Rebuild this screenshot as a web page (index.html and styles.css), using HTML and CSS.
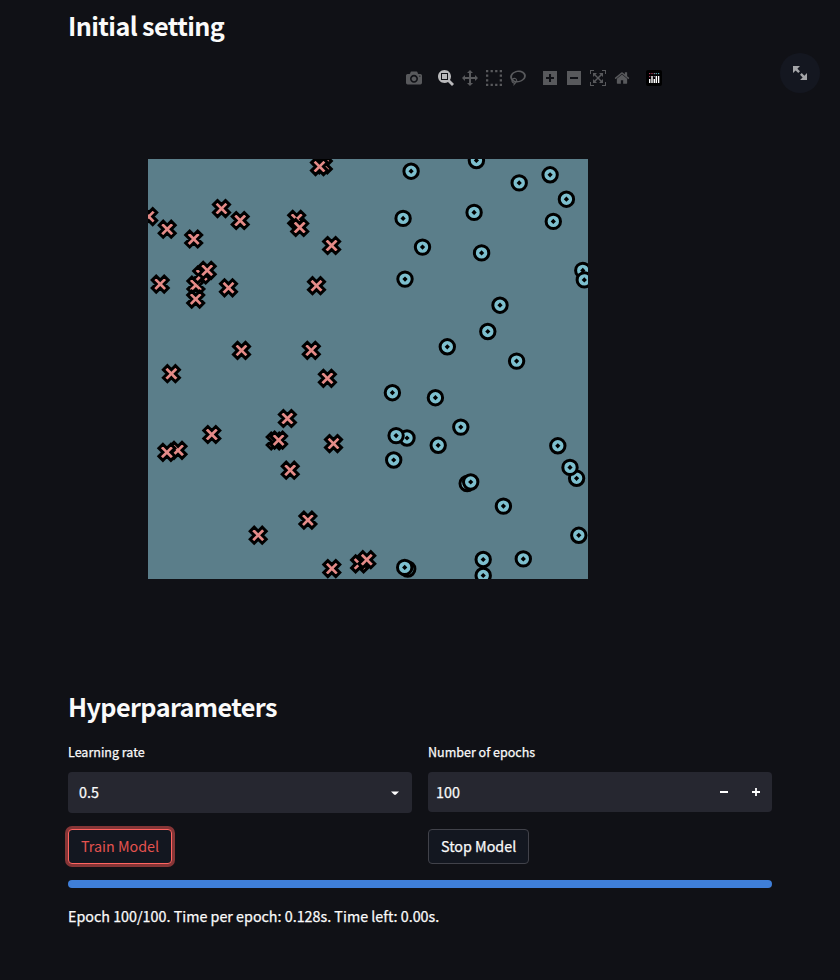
FILE: index.html
```html
<!DOCTYPE html>
<html lang="en">
<head>
<meta charset="utf-8">
<title>Model training</title>
<link rel="stylesheet" href="styles.css">
</head>
<body>
<main class="page">
  <h2 class="heading">Initial setting</h2>
  <section class="chart">
    <div class="modebar">
      <div class="group">
        <svg class="icon" viewBox="0 0 1000 1000"><path transform="matrix(1 0 0 -1 0 850)" d="m500 450c-83 0-150-67-150-150 0-83 67-150 150-150 83 0 150 67 150 150 0 83-67 150-150 150z m400 150h-120c-16 0-34 13-39 29l-31 93c-6 15-23 28-40 28h-340c-16 0-34-13-39-28l-31-94c-6-15-23-28-40-28h-120c-55 0-100-45-100-100v-450c0-55 45-100 100-100h800c55 0 100 45 100 100v450c0 55-45 100-100 100z m-400-550c-138 0-250 112-250 250 0 138 112 250 250 250 138 0 250-112 250-250 0-138-112-250-250-250z m365 380c-19 0-35 16-35 35 0 19 16 35 35 35 19 0 35-16 35-35 0-19-16-35-35-35z"/></svg>
      </div>
      <div class="group">
        <svg class="icon active" viewBox="0 0 1000 1000"><path transform="matrix(1 0 0 -1 0 850)" d="m1000-25l-250 251c40 63 63 138 63 218 0 224-182 406-407 406-224 0-406-182-406-406s183-406 407-406c80 0 155 22 218 62l250-250 125 125z m-812 250l0 438 437 0 0-438-437 0z m62 375l313 0 0-312-313 0 0 312z"/></svg>
        <svg class="icon" viewBox="0 0 1000 1000"><path transform="matrix(1 0 0 -1 0 850)" d="m1000 350l-187 188 0-125-250 0 0 250 125 0-188 187-187-187 125 0 0-250-250 0 0 125-188-188 186-187 0 125 252 0 0-250-125 0 187-188 188 188-125 0 0 250 250 0 0-126 187 188z"/></svg>
        <svg class="icon" viewBox="0 0 1000 1000"><path d="M0 0h143v143H0zM286 0h143v143H286zM571 0h143v143H571zM857 0h143v143H857zM0 857h143v143H0zM286 857h143v143H286zM571 857h143v143H571zM857 857h143v143H857zM0 286h143v143H0zM0 571h143v143H0zM857 286h143v143H857zM857 571h143v143H857z"/></svg>
        <svg class="icon" viewBox="0 0 1031 1000"><path transform="matrix(1 0 0 -1 0 850)" d="m1018 538c-36 207-290 336-568 286-277-48-473-256-436-463 10-57 36-108 76-151-13-66 11-137 68-183 34-28 75-41 114-42l-55-70 0 0c-2-1-3-2-4-3-10-14-8-34 5-45 14-11 34-8 45 4 1 1 2 3 2 5l0 0 113 140c16 11 31 24 45 40 4 3 6 7 8 11 48-3 100 0 151 9 278 48 473 255 436 462z m-624-379c-80 14-149 48-197 96 42 42 109 47 156 9 33-26 47-66 41-105z m-187-74c-19 16-33 37-39 60 50-32 109-55 174-68-42-25-95-24-135 8z m360 75c-34-7-69-9-102-8 8 62-16 128-68 170-73 59-175 54-244-5-9 20-16 40-20 61-28 159 121 317 333 354s407-60 434-217c28-159-121-318-333-355z"/></svg>
      </div>
      <div class="group">
        <svg class="icon" viewBox="0 0 875 1000"><path transform="matrix(1 0 0 -1 0 850)" d="m1 787l0-875 875 0 0 875-875 0z m687-500l-187 0 0-187-125 0 0 187-188 0 0 125 188 0 0 187 125 0 0-187 187 0 0-125z"/></svg>
        <svg class="icon" viewBox="0 0 875 1000"><path transform="matrix(1 0 0 -1 0 850)" d="m0 788l0-876 876 0 0 876-876 0z m688-500l-500 0 0 125 500 0 0-125z"/></svg>
        <svg class="icon" viewBox="0 0 1000 1000"><path transform="matrix(1 0 0 -1 0 850)" d="m250 850l-187 0-63 0 0-62 0-188 63 0 0 188 187 0 0 62z m688 0l-188 0 0-62 188 0 0-188 62 0 0 188 0 62-62 0z m-875-938l0 188-63 0 0-188 0-62 63 0 187 0 0 62-187 0z m875 188l0-188-188 0 0-62 188 0 62 0 0 62 0 188-62 0z m-125 188l-1 0-93-94-156 156 156 156 92-93 2 0 0 250-250 0 0-2 93-92-156-156-156 156 94 92 0 2-250 0 0-250 0 0 93 93 157-156-157-156-93 94 0 0 0-250 250 0 0 0-94 93 156 157 156-157-93-93 0 0 250 0 0 250z"/></svg>
        <svg class="icon" viewBox="0 0 928.6 1000"><path transform="matrix(1 0 0 -1 0 850)" d="m786 296v-267q0-15-11-26t-25-10h-214v214h-143v-214h-214q-15 0-25 10t-11 26v267q0 1 0 2t0 2l321 264 321-264q1-1 1-4z m124 39l-34-41q-5-5-12-6h-2q-7 0-12 3l-386 322-386-322q-7-4-13-4-7 2-12 7l-35 41q-4 5-3 13t6 12l401 334q18 15 42 15t43-15l136-114v109q0 8 5 13t13 5h107q8 0 13-5t5-13v-227l122-102q5-5 6-12t-4-13z"/></svg>
      </div>
      <div class="group">
        <svg class="icon" viewBox="0 0 16 16"><rect width="16" height="16" rx="2" fill="#000"/><g fill="#fff"><rect x="3" y="9" width="1.4" height="4"/><rect x="5.3" y="6" width="1.4" height="7"/><rect x="7.6" y="9" width="1.4" height="4"/><rect x="9.6" y="6" width="1.4" height="7"/><rect x="11.9" y="6" width="1.4" height="7"/></g><g fill="#d9486f"><circle cx="3.7" cy="3.6" r=".7"/><circle cx="3.7" cy="6.6" r=".7"/><circle cx="6" cy="3.6" r=".7"/></g><g fill="#9b93ad"><circle cx="8.3" cy="3.6" r=".7"/><circle cx="8.3" cy="6.6" r=".7"/></g><g fill="#61bfc7"><circle cx="10.3" cy="3.6" r=".7"/><circle cx="12.6" cy="3.6" r=".7"/></g></svg>
      </div>
    </div>
    <div class="fullscreen"><svg viewBox="0 0 8 8"><path d="M0 0v4l1.5-1.5 1.5 1.5 1-1-1.5-1.5 1.5-1.5h-4zm5 4l-1 1 1.5 1.5-1.5 1.5h4v-4l-1.5 1.5-1.5-1.5z"/></svg></div>
    <svg class="plot" viewBox="148 159 440 420">
      <defs>
        <path id="x" class="cross" d="M0 4l4 4 4-4-4-4 4-4-4-4-4 4-4-4-4 4 4 4-4 4 4 4z"/>
        <g id="o" class="ring"><circle r="7.2"/><path d="M0 .5L.5 0 0-.5-.5 0z"/></g>
      </defs>
      <use href="#x" x="323.3" y="165"/><use href="#x" x="319.5" y="166.6"/>
      <use href="#x" x="148.7" y="216.6"/><use href="#x" x="167.2" y="229.2"/>
      <use href="#x" x="221.5" y="208.6"/><use href="#x" x="240.2" y="220.5"/>
      <use href="#x" x="193.7" y="239"/><use href="#x" x="296.7" y="219.3"/>
      <use href="#x" x="299.7" y="227.5"/><use href="#x" x="331.6" y="245.5"/>
      <use href="#x" x="160.2" y="284.1"/><use href="#x" x="195.9" y="285"/>
      <use href="#x" x="201.7" y="275"/><use href="#x" x="207.2" y="270.3"/>
      <use href="#x" x="195.7" y="299.1"/><use href="#x" x="228.5" y="287.8"/>
      <use href="#x" x="316.5" y="285.7"/><use href="#x" x="171.4" y="373.7"/>
      <use href="#x" x="241.5" y="350.4"/><use href="#x" x="311.3" y="350.3"/>
      <use href="#x" x="327.4" y="378.3"/><use href="#x" x="287.4" y="418.5"/>
      <use href="#x" x="275.2" y="441"/><use href="#x" x="278.6" y="440.1"/>
      <use href="#x" x="211.8" y="434.5"/><use href="#x" x="178" y="450.3"/>
      <use href="#x" x="166.9" y="452.3"/><use href="#x" x="333.5" y="443.6"/>
      <use href="#x" x="290.2" y="470.2"/><use href="#x" x="307.9" y="520.1"/>
      <use href="#x" x="258.2" y="535.2"/><use href="#x" x="331.8" y="568.6"/>
      <use href="#x" x="359.6" y="563.9"/><use href="#x" x="366.8" y="559.7"/>
      <use href="#o" x="411.1" y="171.2"/><use href="#o" x="476.4" y="160.5"/>
      <use href="#o" x="519.2" y="182.9"/><use href="#o" x="550.1" y="174.8"/>
      <use href="#o" x="566.4" y="199.2"/><use href="#o" x="553.3" y="221.4"/>
      <use href="#o" x="403.1" y="218.4"/><use href="#o" x="474.1" y="212.4"/>
      <use href="#o" x="422.5" y="247.1"/><use href="#o" x="481.6" y="252.9"/>
      <use href="#o" x="405" y="279.1"/><use href="#o" x="500" y="305.2"/>
      <use href="#o" x="582.8" y="270.4"/><use href="#o" x="584.3" y="279.9"/>
      <use href="#o" x="487.8" y="331.5"/><use href="#o" x="447.3" y="346.8"/>
      <use href="#o" x="516.6" y="361.1"/><use href="#o" x="392.4" y="392.7"/>
      <use href="#o" x="435.4" y="397.7"/><use href="#o" x="460.8" y="427.1"/>
      <use href="#o" x="407" y="438"/><use href="#o" x="396.1" y="435.6"/>
      <use href="#o" x="438.2" y="445.3"/><use href="#o" x="393.7" y="460"/>
      <use href="#o" x="557.8" y="445.8"/><use href="#o" x="576.6" y="478.3"/>
      <use href="#o" x="570" y="467.4"/><use href="#o" x="467.2" y="483.5"/>
      <use href="#o" x="470.7" y="482"/><use href="#o" x="503.4" y="506.1"/>
      <use href="#o" x="578.8" y="535.3"/><use href="#o" x="407.7" y="569"/>
      <use href="#o" x="404.7" y="567.4"/><use href="#o" x="483.2" y="575.5"/>
      <use href="#o" x="483.2" y="559.5"/><use href="#o" x="523.3" y="558.9"/>
    </svg>
  </section>
  <h2 class="heading">Hyperparameters</h2>
  <section class="columns">
    <div class="column">
      <label class="label">Learning rate</label>
      <div class="field select"><span>0.5</span><svg class="caret" viewBox="0 0 8 5"><path d="M0 .4h8L5 3.6Q4 4.5 3 3.6z"/></svg></div>
      <button class="button focused">Train Model</button>
    </div>
    <div class="column">
      <label class="label">Number of epochs</label>
      <div class="field number"><span>100</span><div class="steps"><svg viewBox="0 0 8 8"><path d="M0 3h8v2H0z"/></svg><svg viewBox="0 0 8 8"><path d="M3.1 0h1.8v3.1H8v1.8H4.9V8H3.1V4.9H0V3.1h3.1z"/></svg></div></div>
      <button class="button">Stop Model</button>
    </div>
  </section>
  <div class="progress"></div>
  <p class="status">Epoch 100/100. Time per epoch: 0.128s. Time left: 0.00s.</p>
</main>
</body>
</html>
```
FILE: styles.css
```css
* { box-sizing: border-box; }
body {
  margin: 0;
  background: #101116;
  color: #fafafa;
  font-family: "Noto Sans CJK JP", "Noto Sans", sans-serif;
  font-size: 14.32px;
  font-weight: 400;
  -webkit-text-stroke: 0.25px currentColor;
}
.page { width: 704px; margin: 0 auto; padding-top: 8px; height: 980px; }
.heading { margin: 0; font-size: 25.2px; line-height: 34px; font-weight: 700; letter-spacing: -0.6px; -webkit-text-stroke: 0; }
.chart { position: relative; height: 647px; padding: 117px 0 0 80px; }
.plot { display: block; width: 440px; height: 420px; background: #5b7e8a; overflow: hidden; }
.cross { fill: #e58b88; stroke: #000; stroke-width: 3; }
.ring { fill: #7dbfce; stroke: #000; stroke-width: 3; }
.modebar { position: absolute; top: 28px; right: 106px; display: flex; gap: 8px; }
.group { display: flex; gap: 8px; padding: 0 4px; }
.icon { width: 16px; height: 16px; fill: #58595c; }
.icon.active { fill: #b9b9bb; }
.fullscreen {
  position: absolute; top: 11px; right: -48px; width: 40px; height: 40px;
  border-radius: 50%; background: #141720;
  display: flex; align-items: center; justify-content: center;
}
.fullscreen svg { width: 14px; height: 14px; fill: #a4a5a8; }
.columns { display: grid; grid-template-columns: 1fr 1fr; gap: 16px; margin-top: 19px; }
.column { display: flex; flex-direction: column; align-items: flex-start; height: 122px; }
.label { font-size: 12.53px; line-height: 20px; margin-bottom: 10px; }
.field {
  width: 100%; background: #262730; border-radius: 4px;
  display: flex; align-items: center; justify-content: space-between;
}
.field span { padding-bottom: 2px; }
.select { height: 41px; padding: 0 13px 0 11px; }
.number { height: 40px; padding: 0 12px 0 8px; }
.caret { width: 8px; height: 5px; margin-top: 1px; fill: #fff; }
.steps { display: flex; gap: 24px; }
.steps svg { width: 8px; height: 8px; fill: #fff; }
.button {
  height: 35px; margin-top: auto; padding: 0 12px 2px;
  border: 1px solid #41424a; border-radius: 4px; background: #131720;
  color: inherit; font: inherit; line-height: 31px; white-space: nowrap;
}
.focused { color: #e5534f; border-color: #ff6460; box-shadow: 0 0 0 3px #863536; -webkit-text-stroke: 0; }
.progress { height: 8px; margin-top: 16px; border-radius: 4px; background: #3f7fd9; }
.status { margin: 16px 0 0; line-height: 24px; }
```
